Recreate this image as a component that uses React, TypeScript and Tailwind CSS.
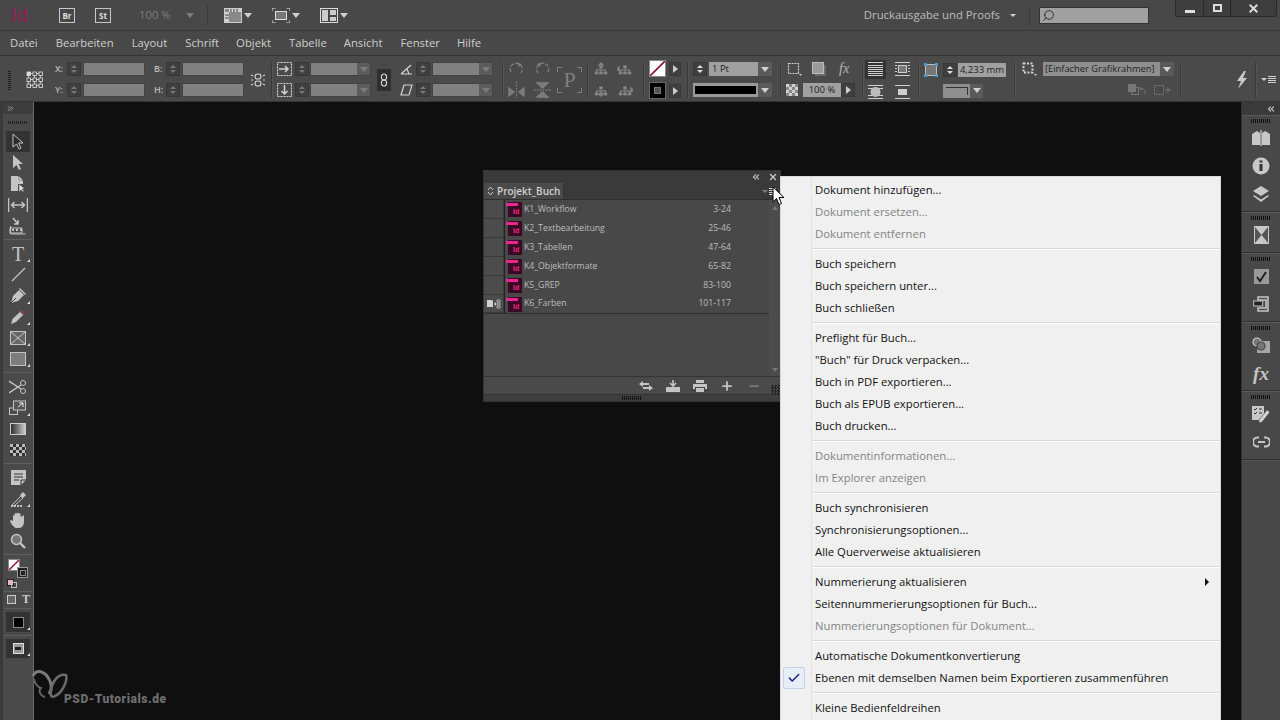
import { ChevronsLeft, X, Minus, Plus, Check, Search } from 'lucide-react';
import type { ReactNode } from 'react';

const UI = "font-['Open_Sans','Noto_Sans',sans-serif]";

// ---- small bits ----

function Ico({ w = 18, h = 18, vb, children, className = '' }: { w?: number; h?: number; vb?: string; children: ReactNode; className?: string }) {
    return (
        <svg width={w} height={h} viewBox={vb ?? `0 0 ${w} ${h}`} className={`shrink-0 ${className}`}>
            {children}
        </svg>
    );
}

function Tri({ dim, small, className = '' }: { dim?: boolean; small?: boolean; className?: string }) {
    const size = small ? 'border-x-[3px] border-t-[3px]' : 'border-x-[4px] border-t-[5px]';
    const color = dim ? 'border-t-[#7c7c7c]' : 'border-t-[#d0d0d0]';
    return <span className={`inline-block w-0 h-0 border-x-transparent shrink-0 ${size} ${color} ${className}`} />;
}

function Sep() {
    return <div className="w-[2px] h-[36px] bg-[#3a3a3a] border-r border-[#555] shrink-0" />;
}

function Spinner({ dim = true }: { dim?: boolean }) {
    const c = dim ? 'border-b-[#777]' : 'border-b-[#ddd]';
    const d = dim ? 'border-t-[#777]' : 'border-t-[#ddd]';
    return (
        <div className="w-[14px] h-[14px] bg-[#3f3f3f] border border-[#383838] flex flex-col items-center justify-center gap-[2px] shrink-0">
            <span className={`w-0 h-0 border-x-[3px] border-x-transparent border-b-[3px] ${c}`} />
            <span className={`w-0 h-0 border-x-[3px] border-x-transparent border-t-[3px] ${d}`} />
        </div>
    );
}

function Field({ w }: { w: string }) {
    return <div className={`h-[14px] bg-[#808080] border border-[#444] shrink-0 ${w}`} />;
}

function ComboField({ w }: { w: string }) {
    return (
        <div className={`h-[14px] flex bg-[#808080] border border-[#444] shrink-0 ${w}`}>
            <div className="flex-1" />
            <div className="w-[13px] bg-[#5c5c5c] flex items-center justify-center">
                <Tri dim />
            </div>
        </div>
    );
}

function ArrowBtn({ w = 'w-[12px]' }: { w?: string }) {
    return (
        <div className={`h-[14px] bg-[#3f3f3f] border border-[#383838] flex items-center justify-center shrink-0 ${w}`}>
            <span className="w-0 h-0 border-y-[4px] border-y-transparent border-l-[5px] border-l-[#ccc]" />
        </div>
    );
}

function Drop({ w = 'w-[14px]' }: { w?: string }) {
    return <div className={`h-[14px] bg-[#5a5a5a] flex items-center justify-center shrink-0 ${w}`}><Tri /></div>;
}

function Col({ top, bottom, className = '' }: { top: ReactNode; bottom: ReactNode; className?: string }) {
    return (
        <div className={`flex flex-col gap-[7px] shrink-0 ${className}`}>
            <div className="h-[14px] flex items-center">{top}</div>
            <div className="h-[14px] flex items-center">{bottom}</div>
        </div>
    );
}

function Lbl({ children }: { children: string }) {
    return <span className={`w-[12px] text-[9px] font-semibold text-[#bbb] ${UI}`}>{children}</span>;
}

// ---- control panel icons ----

const dimIcon = { stroke: '#808080', fill: 'none', strokeWidth: 1.3 };
const brightIcon = { stroke: '#d4d4d4', fill: 'none', strokeWidth: 1.2 };

function RefGrid() {
    const pts = [1, 7, 13];
    return (
        <Ico w={20} h={18}>
            <g {...brightIcon} strokeWidth={0.9}>
                <path d="M5 2.500h3M11 2.500h3M5 8.500h3M11 8.500h3M5 14.500h3M11 14.500h3M3.500 4.500v2M3.500 10.500v2M9.500 4.500v2M9.500 10.500v2M15.500 4.500v2M15.500 10.500v2" />
                {pts.map(y => pts.map(x => <rect key={`${x}-${y}`} x={x + 1} y={y} width={3.500} height={3.500} fill={x === 1 && y === 1 ? '#e0e0e0' : 'none'} />))}
            </g>
        </Ico>
    );
}

function Rotate({ flip = false }: { flip?: boolean }) {
    return (
        <Ico w={17} h={16} className={flip ? '-scale-x-100' : ''}>
            <path d="M3 11A6 6 0 1 1 13 12" {...dimIcon} strokeDasharray="4 1.500" />
            <path d="M10 2l4 1-3 3z" fill="#808080" />
        </Ico>
    );
}

function Tree({ arrow }: { arrow: 'up' | 'down' | 'left' | 'right' }) {
    const a = { up: 'M7 0l4 4H3z', down: 'M7 16l4-4H3z', left: 'M-3 8l4-4v8z', right: 'M17 8l-4-4v8z' }[arrow];
    return (
        <Ico w={16} h={16} vb="-2 0 18 16">
            <path d="M7 5v3M2 12V9h10v3M7 9v3" {...dimIcon} />
            <rect x="5" y="4" width="4" height="3" fill="#888" />
            <rect x="0" y="11" width="4" height="3" fill="#888" />
            <rect x="5" y="11" width="4" height="3" fill="#888" />
            <rect x="10" y="11" width="4" height="3" fill="#888" />
            <path d={a} fill="#808080" />
        </Ico>
    );
}

function StrokeLines({ kind }: { kind: 'fill' | 'frame' | 'dot' | 'bar' }) {
    return (
        <Ico w={15} h={14}>
            <g stroke="#cfcfcf" strokeWidth="1">
                <path d="M0 .500h15M0 13.500h15" />
                {kind === 'fill' && <path d="M0 3.500h15M0 5.500h15M0 7.500h15M0 9.500h15M0 11.500h15" />}
                {kind === 'frame' && <path d="M0 3.500h2M13 3.500h2M0 6.500h2M13 6.500h2M0 9.500h2M13 9.500h2" />}
            </g>
            {kind === 'frame' && <rect x="3.500" y="3.500" width="8" height="7" fill="#777" stroke="#cfcfcf" />}
            {kind === 'dot' && <><path d="M0 3.500h15M0 10.500h15" stroke="#cfcfcf" /><circle cx="7.500" cy="7" r="5" fill="#bdbdbd" /></>}
            {kind === 'bar' && <rect x="3" y="4" width="9" height="6" fill="#cfcfcf" />}
        </Ico>
    );
}

function ControlPanel() {
    return (
        <div className="h-[47px] bg-[#4a4a4a] border-y border-[#343434] flex items-center shrink-0 pl-[8px] pt-[2px]">
            <div className="w-[3px] h-[20px] bg-[repeating-linear-gradient(0deg,#222_0_1px,transparent_1px_2px)] shrink-0" />
            <div className="ml-[14px] shrink-0"><RefGrid /></div>
            <Col className="ml-[10px]"
                top={<><Lbl>X:</Lbl><Spinner /><Field w="w-[62px] ml-[2px]" /></>}
                bottom={<><Lbl>Y:</Lbl><Spinner /><Field w="w-[62px] ml-[2px]" /></>} />
            <Col className="ml-[9px]"
                top={<><Lbl>B:</Lbl><Spinner /><Field w="w-[62px] ml-[2px]" /></>}
                bottom={<><Lbl>H:</Lbl><Spinner /><Field w="w-[62px] ml-[2px]" /></>} />
            <div className="ml-[6px] shrink-0">
                <Ico w={16} h={16}>
                    <rect x="5" y="2" width="6" height="5" rx="2.500" {...brightIcon} />
                    <rect x="5" y="9" width="6" height="5" rx="2.500" {...brightIcon} />
                    <path d="M1 3l2 1M1 8h2M1 13l2-1M15 3l-2 1M15 8h-2M15 13l-2-1" {...brightIcon} />
                </Ico>
            </div>
            <div className="ml-[5px]"><Sep /></div>
            <Col className="ml-[4px]"
                top={<>
                    <Ico w={15} h={14}><rect x=".5" y=".5" width="14" height="13" {...brightIcon} strokeDasharray="2 1" /><path d="M2 7h9M8 4l3 3-3 3" {...brightIcon} strokeWidth={1.500} /></Ico>
                    <div className="ml-[3px]"><Spinner /></div><ComboField w="w-[61px] ml-[1px]" /></>}
                bottom={<>
                    <Ico w={15} h={14}><rect x=".5" y=".5" width="14" height="13" {...brightIcon} strokeDasharray="2 1" /><path d="M7.500 2v9M4.500 8l3 3 3-3" {...brightIcon} strokeWidth={1.500} /></Ico>
                    <div className="ml-[3px]"><Spinner /></div><ComboField w="w-[61px] ml-[1px]" /></>} />
            <div className="ml-[6px] w-[14px] h-[22px] bg-[#2f2f2f] flex items-center justify-center shrink-0">
                <Ico w={8} h={14}>
                    <rect x="1.500" y="1" width="5" height="6" rx="2.500" {...brightIcon} />
                    <rect x="1.500" y="7" width="5" height="6" rx="2.500" {...brightIcon} />
                </Ico>
            </div>
            <Col className="ml-[9px]"
                top={<>
                    <Ico w={13} h={12}><path d="M1 11L11 2M1 11h11M7 6l2 5" {...brightIcon} /></Ico>
                    <div className="ml-[3px]"><Spinner /></div><ComboField w="w-[61px] ml-[2px]" /></>}
                bottom={<>
                    <Ico w={13} h={12}><path d="M4 1h8L9 11H1z" {...brightIcon} /></Ico>
                    <div className="ml-[3px]"><Spinner /></div><ComboField w="w-[61px] ml-[2px]" /></>} />
            <div className="ml-[9px]"><Sep /></div>
            <Col className="ml-[4px]" top={<Rotate />} bottom={<Ico w={17} h={16}><path d="M8.500 0v16" {...dimIcon} strokeDasharray="1.500 1.500" /><path d="M1 14V6l5 4zM16 14V6l-5 4z" {...dimIcon} fill="#777" /></Ico>} />
            <Col className="ml-[9px]" top={<Rotate flip />} bottom={<Ico w={17} h={16}><path d="M0 8h17" {...dimIcon} strokeDasharray="1.500 1.500" /><path d="M3 1h11L8.500 6zM3 15h11L8.500 10z" {...dimIcon} fill="#777" /></Ico>} />
            <div className="ml-[6px] shrink-0 w-[25px] h-[26px] relative flex items-center justify-center">
                <span className="font-['Liberation_Serif',serif] text-[22px] leading-none text-[#808080]">P</span>
                <div className="absolute left-0 top-0 w-[5px] h-[5px] border-l border-t border-[#808080]" />
                <div className="absolute right-0 top-0 w-[5px] h-[5px] border-r border-t border-[#808080]" />
                <div className="absolute left-0 bottom-0 w-[5px] h-[5px] border-l border-b border-[#808080]" />
                <div className="absolute right-0 bottom-0 w-[5px] h-[5px] border-r border-b border-[#808080]" />
            </div>
            <div className="ml-[5px]"><Sep /></div>
            <Col className="ml-[4px]" top={<Tree arrow="up" />} bottom={<Tree arrow="down" />} />
            <Col className="ml-[8px]" top={<Tree arrow="left" />} bottom={<Tree arrow="right" />} />
            <div className="ml-[10px]"><Sep /></div>
            <div className="ml-[4px] flex flex-col gap-[5px] shrink-0">
                <div className="flex items-center gap-[3px]">
                    <div className="w-[17px] h-[17px] bg-white border border-[#888] shrink-0">
                        <Ico w={15} h={15}><path d="M0 15L15 0" stroke="#8c1230" strokeWidth="1.600" /></Ico>
                    </div>
                    <ArrowBtn />
                </div>
                <div className="flex items-center gap-[3px]">
                    <div className="w-[17px] h-[17px] bg-black border border-[#666] flex items-center justify-center shrink-0">
                        <div className="w-[7px] h-[7px] bg-[#555] border border-[#777]" />
                    </div>
                    <ArrowBtn />
                </div>
            </div>
            <div className="ml-[6px]"><Sep /></div>
            <Col className="ml-[4px]"
                top={<>
                    <Spinner dim={false} />
                    <div className={`ml-[2px] w-[49px] h-[14px] bg-[#a0a0a0] text-[9.5px] leading-[14px] pl-[3px] text-[#222] ${UI}`}>1 Pt</div>
                    <Drop /></>}
                bottom={<>
                    <div className="w-[65px] h-[14px] bg-[#999] flex items-center px-[2px]"><div className="w-full h-[8px] bg-black" /></div>
                    <Drop /></>} />
            <div className="ml-[8px]"><Sep /></div>
            <div className="ml-[4px] w-[69px] flex flex-col gap-[7px] shrink-0">
                <div className="h-[14px] flex items-center">
                    <Ico w={16} h={14}><rect x="2.500" y="1.500" width="10" height="10" {...brightIcon} strokeDasharray="2 1" /><path d="M13 12h3l-1.500 2z" fill="#ccc" /></Ico>
                    <div className="ml-[10px]">
                        <Ico w={15} h={14}><rect x="3" y="3" width="11" height="11" fill="#6a6a6a" /><rect x=".5" y=".5" width="11" height="11" fill="#999" stroke="#bbb" /></Ico>
                    </div>
                    <span className="ml-[12px] w-[16px] italic text-[14px] leading-none text-[#b8b8b8] font-['Liberation_Serif',serif]">fx</span>
                </div>
                <div className="h-[14px] flex items-center">
                    <Ico w={12} h={12}>
                        <rect width="12" height="12" fill="#888" />
                        <path d="M0 0h3v3H0zM6 0h3v3H6zM3 3h3v3H3zM9 3h3v3H9zM0 6h3v3H0zM6 6h3v3H6zM3 9h3v3H3zM9 9h3v3H9z" fill="#d0d0d0" />
                    </Ico>
                    <div className={`ml-[5px] w-[38px] h-[14px] bg-[#a0a0a0] text-[9.5px] leading-[14px] text-center text-[#222] ${UI}`}>100 %</div>
                    <ArrowBtn w="w-[14px]" />
                </div>
            </div>
            <div className="ml-[7px]"><Sep /></div>
            <div className="ml-[1px] flex flex-col gap-[5px] shrink-0">
                <div className="w-[21px] h-[19px] bg-[#333] flex items-center justify-center"><StrokeLines kind="fill" /></div>
                <div className="w-[21px] h-[16px] flex items-center justify-center"><StrokeLines kind="dot" /></div>
            </div>
            <div className="ml-[9px] flex flex-col gap-[5px] shrink-0">
                <div className="w-[15px] h-[19px] flex items-center justify-center"><StrokeLines kind="frame" /></div>
                <div className="w-[15px] h-[16px] flex items-center justify-center"><StrokeLines kind="bar" /></div>
            </div>
            <div className="ml-[8px]"><Sep /></div>
            <div className="ml-[3px] flex flex-col gap-[6px] shrink-0 items-end">
                <div className="flex items-center">
                    <Ico w={16} h={16}>
                        <rect x="2.500" y="2.500" width="11" height="11" fill="#777" stroke="#bbb" />
                        {[0, 11].map(x => [0, 11].map(y => <rect key={`${x}${y}`} x={x + 1} y={y + 1} width="3" height="3" fill="#4a9bd0" />))}
                    </Ico>
                    <div className="ml-[4px]"><Spinner dim={false} /></div>
                    <div className={`ml-[1px] w-[48px] h-[14px] bg-[#a0a0a0] text-[9.5px] leading-[14px] text-center whitespace-nowrap text-[#222] ${UI}`}>4,233 mm</div>
                </div>
                <div className="flex items-center mr-[23px]">
                    <div className="w-[27px] h-[14px] bg-[#8f8f8f] flex items-start justify-end pr-[2px] pt-[3px]"><div className="w-[22px] h-[8px] border-t border-r border-[#333]" /></div>
                    <Drop w="w-[13px]" />
                </div>
            </div>
            <div className="ml-[8px]"><Sep /></div>
            <Col className="ml-[6px]"
                top={<>
                    <Ico w={15} h={14}><rect x="1.500" y="1.500" width="9" height="9" {...brightIcon} strokeDasharray="2 1.500" strokeWidth={2} /><path d="M12 12h3l-1.500 2z" fill="#ccc" /></Ico>
                    <div className={`ml-[6px] w-[117px] h-[14px] bg-[#8f8f8f] text-[9.3px] leading-[14px] pl-[2px] text-[#222] whitespace-nowrap overflow-hidden ${UI}`}>[Einfacher Grafikrahmen]</div>
                    <Drop /></>}
                bottom={<div className="w-full flex justify-end gap-[7px] pr-[2px]">
                    <Ico w={19} h={12}><rect x=".5" y=".5" width="7" height="7" fill="#777" stroke="#777" /><rect x="3.500" y="3.500" width="7" height="7" fill="none" stroke="#777" /><path d="M13 3l-1 2 2 1M12 5c4-1 6 1 5 5" stroke="#777" fill="none" /></Ico>
                    <Ico w={18} h={12}><rect x=".5" y="1.500" width="9" height="9" fill="none" stroke="#777" strokeDasharray="2 1" /><path d="M14 3v6M11 6h6" stroke="#777" /></Ico>
                </div>} />
            <div className="ml-[6px]"><Sep /></div>
            <div className="ml-[53px] shrink-0">
                <Ico w={14} h={18}><path d="M9 0L2 10h4L3 18l9-11H8l3-7z" fill="#c8c8c8" /></Ico>
            </div>
            <div className="ml-[6px]"><Sep /></div>
            <div className="ml-[4px] flex items-center gap-[1px] shrink-0">
                <Tri small />
                <div className="w-[8px] h-[7px] bg-[repeating-linear-gradient(180deg,#d0d0d0_0_1px,transparent_1px_2px)]" />
            </div>
        </div>
    );
}

function TitleBar() {
    return (
        <div className="h-[31px] bg-[#484848] border-b border-[#383838] flex items-center shrink-0 relative">
            <span className="ml-[11px] w-[21px] font-['Liberation_Sans',sans-serif] font-bold text-[20px] text-[#7d2c52] leading-none">Id</span>
            <div className={`ml-[27px] w-[16px] h-[15px] border border-[#c8c8c8] text-[8px] leading-[13px] text-center font-bold text-[#ddd] ${UI}`}>Br</div>
            <div className={`ml-[20px] w-[16px] h-[15px] border border-[#c8c8c8] text-[8px] leading-[13px] text-center font-bold text-[#ddd] ${UI}`}>St</div>
            <span className={`ml-[28px] w-[45px] text-[11.3px] text-[#7c7c7c] ${UI}`}>100 %</span>
            <Tri dim className="ml-[2px]" />
            <div className="ml-[13px] w-px h-[20px] bg-[#3a3a3a]" />
            <div className="ml-[16px] flex items-center gap-[2px]">
                <Ico w={18} h={15}><rect x=".5" y=".5" width="17" height="14" fill="#888" stroke="#ccc" /><path d="M1 1h16v3H1z M1 1v13h4V1z" fill="#d0d0d0" /><path d="M7 1v3M10 1v3M13 1v3M1 7h4M1 10h4" stroke="#444" /></Ico>
                <Tri />
            </div>
            <div className="ml-[20px] flex items-center gap-[2px]">
                <Ico w={18} h={15}><rect x="3.500" y="3.500" width="11" height="8" fill="#777" stroke="#ddd" /><path d="M0 3V0h4M14 0h4v3M0 12v3h4M14 15h4v-3" fill="none" stroke="#ddd" /></Ico>
                <Tri />
            </div>
            <div className="ml-[20px] flex items-center gap-[2px]">
                <Ico w={18} h={15}><rect x=".5" y=".5" width="17" height="14" fill="none" stroke="#ddd" /><path d="M2 2h6v11H2zM10 2h6v5h-6zM10 9h6v4h-6z" fill="#ccc" /></Ico>
                <Tri />
            </div>
            <div className="flex-1" />
            <span className={`text-[11.3px] text-[#bdbdbd] whitespace-nowrap ${UI}`}>Druckausgabe und Proofs</span>
            <Tri small className="ml-[10px]" />
            <div className="ml-[13px] w-px h-[20px] bg-[#3a3a3a]" />
            <div className="ml-[9px] mr-[131px] w-[110px] h-[17px] bg-[#a0a0a0] border border-[#333] flex items-center pl-[2px]">
                <Search size={13} strokeWidth={1.600} color="#222" className="-scale-x-100" />
            </div>
            {/* window buttons */}
            <div className="absolute right-[3px] top-0 w-[102px] h-[17px] bg-[#3e3e3e] border-x border-b border-[#2a2a2a] rounded-b-[3px] flex">
                <div className="w-[28px] flex items-end justify-center pb-[3px] border-r border-[#2a2a2a]"><div className="w-[10px] h-[3px] bg-[#ddd]" /></div>
                <div className="w-[27px] flex items-center justify-center border-r border-[#2a2a2a]"><div className="w-[9px] h-[8px] border-2 border-[#ddd]" /></div>
                <div className="flex-1 flex items-center justify-center"><X size={13} strokeWidth={3.500} color="#ddd" /></div>
            </div>
        </div>
    );
}

function MenuBar() {
    const items = [['Datei', 'ml-[10px]'], ['Bearbeiten', 'ml-[18px]'], ['Layout', 'ml-[18px]'], ['Schrift', 'ml-[18px]'], ['Objekt', 'ml-[17px]'], ['Tabelle', 'ml-[18px]'], ['Ansicht', 'ml-[17px]'], ['Fenster', 'ml-[18px]'], ['Hilfe', 'ml-[17px]']];
    return (
        <div className={`h-[24px] bg-[#484848] flex items-center shrink-0 text-[11.3px] text-[#cfcfcf] ${UI}`}>
            {items.map(([t, m]) => <span key={t} className={m}>{t}</span>)}
        </div>
    );
}

// ---- left tools ----

const g = '#c4c4c4';

function Tool({ h = 'h-[21px]', active, more, children }: { h?: string; active?: boolean; more?: boolean; children: ReactNode }) {
    return (
        <div className={`${h} w-[24px] mx-auto flex items-center justify-center relative shrink-0 ${active ? 'bg-[#333]' : ''}`}>
            {children}
            {more && <span className="absolute right-0 bottom-[2px] w-0 h-0 border-l-[3px] border-l-transparent border-b-[3px] border-b-[#ddd]" />}
        </div>
    );
}

function Rule() {
    return <div className="w-[28px] h-px bg-[#5e5e5e] my-[3px] shrink-0 mx-auto" />;
}

function LeftTools() {
    return (
        <div className="w-[34px] bg-[#4a4a4a] border-l-[3px] border-l-[#3a3a3a] border-r border-r-[#6a6a6a] flex flex-col shrink-0">
            <div className="h-[12px] bg-[#3d3d3d] shrink-0 flex items-center pl-[3px] text-[#bbb]"><ChevronsLeft size={9} className="rotate-180" /></div>
            <div className="h-[17px] shrink-0 flex items-center justify-center"><div className="w-[20px] h-[3px] bg-[repeating-linear-gradient(90deg,#222_0_1px,transparent_1px_2px)]" /></div>
            <Tool active><Ico w={14} h={17}><path d="M2 1v13l3.500-3 2.500 5 2-1-2.500-5H12z" fill="#2a2a2a" stroke={g} /></Ico></Tool>
            <Tool><Ico w={14} h={17}><path d="M2 1v13l3.500-3 2.500 5 2-1-2.500-5H12z" fill={g} /></Ico></Tool>
            <Tool><Ico w={16} h={18}><path d="M1 1h7l5 5v3H8v7H1z" fill={g} /><path d="M9 1l4 4H9zM9 9v8l2-2 2 2 1-1-2-2h3z" fill="#e0e0e0" stroke="#444" strokeWidth=".5" /></Ico></Tool>
            <Tool><Ico w={20} h={16}><path d="M.500 1v14M19.500 1v14" stroke={g} strokeWidth="1.500" /><path d="M4 8h12M6.500 5L3.500 8l3 3M13.500 5l3 3-3 3" fill="none" stroke={g} strokeWidth="1.500" /></Ico></Tool>
            <Tool><Ico w={18} h={18}><path d="M1.500 9v8h15M1 11h12v5H1z" fill="none" stroke={g} /><path d="M3 12h2v2H3zM7 12h2v2H7zM11 12h2v2h-2z" fill={g} /><path d="M4 1l5 6M9 3v4H5" fill="none" stroke={g} strokeWidth="1.500" /></Ico></Tool>
            <Rule />
            <Tool more><span className="font-['Liberation_Serif',serif] text-[20px] leading-none text-[#c4c4c4]">T</span></Tool>
            <Tool><Ico w={15} h={15}><path d="M1 14L14 1" stroke={g} strokeWidth="1.200" /></Ico></Tool>
            <Tool more><Ico w={17} h={17}><path d="M1 16l2-7 6-6 5 5-6 6z" fill={g} /><path d="M10 1l6 6-1 1-6-6z" fill={g} /><path d="M1 16l5-5" stroke="#444" /></Ico></Tool>
            <Tool more><Ico w={16} h={16}><path d="M1 15l1.500-5L11 2l3 3-8 8z" fill={g} /><path d="M10 3l3 3 2-2-3-3z" fill="#8a3a4a" /></Ico></Tool>
            <Tool more><Ico w={16} h={14}><rect x=".5" y=".5" width="15" height="13" fill="#666" stroke={g} /><path d="M1 1l14 12M15 1L1 13" stroke={g} /></Ico></Tool>
            <Tool more><Ico w={16} h={14}><rect x=".5" y=".5" width="15" height="13" fill="#7d7d7d" stroke={g} /></Ico></Tool>
            <Rule />
            <Tool><Ico w={18} h={14}><circle cx="14" cy="3" r="2.500" fill="none" stroke={g} /><circle cx="14" cy="11" r="2.500" fill="none" stroke={g} /><path d="M0 1l12 8M0 13l12-8" stroke={g} strokeWidth="1.500" /></Ico></Tool>
            <Tool more><Ico w={18} h={15}><rect x=".5" y="8" width="8" height="6.500" fill="none" stroke={g} /><rect x="4.500" y="1" width="12" height="9" fill="#555" stroke={g} /><path d="M9 7l5-4M10 3h4v4" fill="none" stroke="#eee" /></Ico></Tool>
            <Tool><div className="w-[16px] h-[12px] border border-[#ccc] bg-gradient-to-r from-[#333] to-[#ccc]" /></Tool>
            <Tool><div className="w-[16px] h-[12px] bg-[repeating-conic-gradient(#333_0_25%,#bbb_0_50%)] bg-[length:6px_6px]" /></Tool>
            <Rule />
            <Tool><Ico w={15} h={15}><path d="M0 0h15v10l-5 5H0z" fill={g} /><path d="M3 4h9M3 7h9M3 10h5" stroke="#333" /><path d="M10 15v-5h5" fill="none" stroke="#333" /></Ico></Tool>
            <Tool more><Ico w={17} h={16}><path d="M2 14L11 5l2 2-9 8z" fill="none" stroke={g} /><path d="M10 4l3-3 3 3-3 3z" fill={g} /><path d="M1 15h12" stroke={g} strokeWidth="2" strokeDasharray="2 1" /></Ico></Tool>
            <Tool><Ico w={16} h={16}><path d="M3 9V4c0-1 1.500-1 1.500 0V2c0-1 2-1 2 0v-.5c0-1 2-1 2 0V2c0-1 2-1 2 0v3c0-1 2-1 2 0v-1c0-1 1.500-1 1.500 0v6c0 3-2 6-5 6H6C4 16 0 10 0 9c0-1 2-1 3 0z" fill={g} /></Ico></Tool>
            <Tool><Ico w={16} h={16}><circle cx="6.500" cy="6.500" r="5" fill="#777" stroke={g} strokeWidth="1.500" /><path d="M10 10l5 5" stroke={g} strokeWidth="2.400" /></Ico></Tool>
            <Rule />
            <div className="h-[30px] w-[24px] mx-auto relative shrink-0">
                <div className="absolute left-[2px] top-[1px] w-[12px] h-[12px] bg-white border border-[#888] overflow-hidden"><Ico w={10} h={10}><path d="M0 10L10 0" stroke="#8c1230" strokeWidth="1.400" /></Ico></div>
                <div className="absolute left-[11px] top-[9px] w-[11px] h-[11px] bg-[#222] border border-[#999] flex items-center justify-center"><div className="w-[6px] h-[6px] border border-[#888]" /></div>
                <div className="absolute left-[1px] top-[21px] w-[7px] h-[7px] bg-[#e8b8c8] border border-[#222]" />
                <div className="absolute left-[5px] top-[24px] w-[6px] h-[6px] border border-[#bbb]" />
            </div>
            <Rule />
            <div className="h-[12px] w-[24px] mx-auto flex items-center justify-between shrink-0 -mt-[2px]">
                <div className="w-[9px] h-[9px] border border-[#ccc] bg-[#666] ml-[1px]" />
                <span className="font-['Liberation_Serif',serif] font-bold text-[12px] leading-none text-[#ccc]">T</span>
            </div>
            <Rule />
            <Tool h="h-[20px]" active more><div className="w-[11px] h-[11px] bg-black border border-[#888]" /></Tool>
            <Rule />
            <Tool h="h-[19px]" active more><div className="w-[11px] h-[11px] bg-[#999] border border-[#ddd] flex items-center justify-center"><div className="w-[6px] h-[3px] bg-[#222]" /></div></Tool>
        </div>
    );
}

// ---- book panel ----

const docs = [
    ['K1_Workflow', '3-24'],
    ['K2_Textbearbeitung', '25-46'],
    ['K3_Tabellen', '47-64'],
    ['K4_Objektformate', '65-82'],
    ['K5_GREP', '83-100'],
    ['K6_Farben', '101-117'],
];

function DocIcon() {
    return (
        <div className="w-[16px] h-[15px] relative shrink-0">
            <div className="absolute left-[2px] top-0 w-[14px] h-[15px] bg-[#3a0a24]" />
            <div className="absolute left-0 top-[1px] w-[12px] h-[3px] bg-[#e8288c]" />
            <span className="absolute left-[7px] top-[5px] text-[7px] leading-[9px] font-bold text-[#f0287f] font-['Liberation_Sans',sans-serif]">Id</span>
        </div>
    );
}

function BookPanel() {
    return (
        <div className={`absolute left-[483px] top-[170px] w-[298px] h-[232px] bg-[#484848] border border-[#333] flex flex-col ${UI}`}>
            <div className="h-[12px] bg-[#3a3a3a] flex items-center justify-end gap-[7px] pr-[2px] shrink-0">
                <ChevronsLeft size={10} strokeWidth={3} color="#bbb" />
                <X size={10} strokeWidth={3} color="#ccc" />
            </div>
            <div className="h-[17px] bg-[#3a3a3a] flex shrink-0 border-b border-[#2f2f2f]">
                <div className="w-[80px] bg-[#4a4a4a] flex items-center pl-[3px] border-r border-[#333]">
                    <Ico w={7} h={10}><path d="M1 4l2.500-3L6 4M1 6l2.500 3L6 6" fill="none" stroke="#ccc" /></Ico>
                    <span className="text-[10px] font-semibold text-[#d0d0d0] ml-[3px] whitespace-nowrap">Projekt_Buch</span>
                </div>
                <div className="flex-1" />
                <div className="mr-[2px] w-[16px] flex items-center gap-[1px]">
                    <Tri small dim />
                    <div className="w-[7px] h-[7px] bg-[repeating-linear-gradient(180deg,#d0d0d0_0_1px,transparent_1px_2px)]" />
                </div>
            </div>
            <div className="flex-1 flex min-h-0">
                <div className="flex-1">
                    {docs.map(([name, pages], i) => (
                        <div key={name} className={`h-[19px] flex items-center ${i === 5 ? 'border-b border-[#2f2f2f]' : ''}`}>
                            <div className="w-[20px] h-full bg-[#4c4c4c] border-r border-b border-[#3a3a3a] flex items-center justify-center shrink-0">
                                {i === 5 && <Ico w={14} h={10}><path d="M0 1h5l1 1v6H0z" fill="#d0d0d0" /><path d="M7 5l2-2v4z" fill="#d0d0d0" /><path d="M10 1h3v2h-3zM10 4h3v2h-3zM10 7h3v2h-3z" fill="none" stroke="#d0d0d0" strokeWidth=".7" /></Ico>}
                            </div>
                            <div className="w-px h-full bg-[#222] shrink-0" />
                            <div className="ml-[1px]"><DocIcon /></div>
                            <span className="ml-[2px] text-[8.7px] text-[#bdbdbd] whitespace-nowrap">{name}</span>
                            <span className="ml-auto mr-[38px] text-[8.7px] text-[#bdbdbd]">{pages}</span>
                        </div>
                    ))}
                </div>
                <div className="w-[11px] bg-[#4c4c4c] flex flex-col items-center justify-between pt-[6px] pb-[4px] shrink-0">
                    <span className="w-0 h-0 border-x-[3px] border-x-transparent border-b-[4px] border-b-[#777]" />
                    <span className="w-0 h-0 border-x-[3px] border-x-transparent border-t-[4px] border-t-[#777]" />
                </div>
            </div>
            <div className="h-[18px] bg-[#4a4a4a] border-t border-[#333] flex items-center justify-end gap-[13px] pr-[19px] shrink-0 relative">
                <Ico w={14} h={12}><path d="M0 4l4-3v2h6v2H4v2zM14 8l-4-3v2H4v2h6v2z" fill="#c4c4c4" /></Ico>
                <Ico w={14} h={12}><path d="M0 7h14v5H0z" fill="#c4c4c4" /><path d="M7 0v6M4 3l3 3 3-3" stroke="#c4c4c4" strokeWidth="1.600" fill="none" /></Ico>
                <Ico w={14} h={12}><path d="M3 0h8v3H3zM0 4h14v5h-2V7H2v2H0zM3 8h8v4H3z" fill="#c4c4c4" /></Ico>
                <Plus size={14} strokeWidth={3} color="#c4c4c4" />
                <Minus size={14} strokeWidth={3} color="#777" />
                <div className="absolute right-0 bottom-0 w-[9px] h-[9px] bg-[repeating-conic-gradient(#222_0_25%,transparent_0_50%)] bg-[length:3px_3px]" />
            </div>
            <div className="h-[7px] bg-[#3e3e3e] border-t border-[#333] flex items-center justify-center shrink-0">
                <div className="w-[20px] h-[4px] bg-[repeating-linear-gradient(90deg,#111_0_1px,transparent_1px_2px)]" />
            </div>
        </div>
    );
}

// ---- context menu ----

type Item = { t: string; off?: boolean; sub?: boolean; check?: boolean };
const groups: Item[][] = [
    [{ t: 'Dokument hinzufügen...' }, { t: 'Dokument ersetzen...', off: true }, { t: 'Dokument entfernen', off: true }],
    [{ t: 'Buch speichern' }, { t: 'Buch speichern unter...' }, { t: 'Buch schließen' }],
    [{ t: 'Preflight für Buch...' }, { t: '"Buch" für Druck verpacken...' }, { t: 'Buch in PDF exportieren...' }, { t: 'Buch als EPUB exportieren...' }, { t: 'Buch drucken...' }],
    [{ t: 'Dokumentinformationen...', off: true }, { t: 'Im Explorer anzeigen', off: true }],
    [{ t: 'Buch synchronisieren' }, { t: 'Synchronisierungsoptionen...' }, { t: 'Alle Querverweise aktualisieren' }],
    [{ t: 'Nummerierung aktualisieren', sub: true }, { t: 'Seitennummerierungsoptionen für Buch...' }, { t: 'Nummerierungsoptionen für Dokument...', off: true }],
    [{ t: 'Automatische Dokumentkonvertierung' }, { t: 'Ebenen mit demselben Namen beim Exportieren zusammenführen', check: true }],
    [{ t: 'Kleine Bedienfeldreihen' }],
];

function BookMenu() {
    return (
        <div className={`absolute left-[780px] top-[176px] bottom-0 w-[441px] bg-[#f0f0f0] border-l border-t border-r border-[#d8d8d8] overflow-hidden pt-[2px] ${UI}`}>
            <div className="absolute left-[30px] top-0 bottom-0 w-px bg-[#e3e3e3]" />
            {groups.map((grp, i) => (
                <div key={i}>
                    {i > 0 && <div className="h-[8px] flex items-center pl-[30px]"><div className="w-full h-px bg-[#d9d9d9] border-b border-white box-content" /></div>}
                    {grp.map(it => (
                        <div key={it.t} className={`h-[22px] flex items-center pl-[34px] pr-[11px] relative text-[11.3px] whitespace-nowrap ${it.off ? 'text-[#848484]' : 'text-[#111]'}`}>
                            {it.check && (
                                <div className="absolute left-[2px] top-0 w-[22px] h-[22px] bg-[#e8eef8] border border-[#c5d2e8] rounded-[2px] flex items-center justify-center">
                                    <Check size={14} strokeWidth={2.600} color="#1a237e" />
                                </div>
                            )}
                            {it.t}
                            {it.sub && <span className="ml-auto w-0 h-0 border-y-[4px] border-y-transparent border-l-[4px] border-l-[#111]" />}
                        </div>
                    ))}
                </div>
            ))}
        </div>
    );
}

function Cursor() {
    return (
        <svg width="14" height="20" viewBox="0 0 14 20" className="absolute left-[772px] top-[186px]">
            <path d="M1 1v15l3.500-3.500 2.500 6 2.500-1-2.500-6H12z" fill="#fff" stroke="#000" />
        </svg>
    );
}

// ---- right dock ----

function DockGroup({ h, children }: { h: string; children: ReactNode }) {
    return (
        <div className={`${h} border-b border-[#2f2f2f] border-t-[1px] border-t-[#5a5a5a] flex flex-col items-center pt-[3px] shrink-0`}>
            <div className="w-[20px] h-[4px] bg-[repeating-linear-gradient(90deg,#111_0_1px,transparent_1px_2px)] mb-[1px] shrink-0" />
            {children}
        </div>
    );
}

function DockIcon({ children }: { children: ReactNode }) {
    return <div className="h-[28px] flex items-center justify-center shrink-0">{children}</div>;
}

function RightDock() {
    const c = '#c8c8c8';
    return (
        <div className="w-[39px] bg-[#484848] border-l border-[#333] flex flex-col shrink-0">
            <div className="h-[13px] bg-[#3a3a3a] flex items-center justify-end pr-[4px] shrink-0">
                <ChevronsLeft size={10} strokeWidth={3} color="#bbb" />
            </div>
            <DockGroup h="h-[97px]">
                <DockIcon><Ico w={18} h={16}><path d="M0 4l5-3 3 2v12H0zM18 4l-5-3-3 2v12h8z" fill={c} /><path d="M9 0v16" stroke="#eee" /></Ico></DockIcon>
                <DockIcon><Ico w={18} h={18}><circle cx="9" cy="9" r="8.500" fill={c} /><path d="M7.500 7h3v7h-3zM7.500 3.500h3v2h-3z" fill="#333" /></Ico></DockIcon>
                <DockIcon><Ico w={18} h={18}><path d="M9 1l8 5-8 5-8-5z" fill={c} /><path d="M2 10l7 4.500L16 10l1 1-8 6-8-6z" fill={c} /></Ico></DockIcon>
            </DockGroup>
            <DockGroup h="h-[41px]">
                <DockIcon><Ico w={15} h={18}><rect x=".5" y=".5" width="14" height="17" fill="#555" stroke={c} /><path d="M1 1h13L7.500 9zM1 17h13L7.500 9z" fill={c} /></Ico></DockIcon>
            </DockGroup>
            <DockGroup h="h-[69px]">
                <DockIcon><Ico w={15} h={15}><rect width="15" height="15" fill="#999" /><path d="M3 8l3 4 6-9" stroke="#222" strokeWidth="2" fill="none" /></Ico></DockIcon>
                <DockIcon><Ico w={16} h={16}><path d="M5 1h10v14H5v-3h8V4H5z" fill="none" stroke={c} strokeWidth="1.500" /><rect x="0.700" y="5" width="9" height="5" fill="#222" stroke={c} /></Ico></DockIcon>
            </DockGroup>
            <DockGroup h="h-[69px]">
                <DockIcon><Ico w={18} h={16}><rect x="5" y="4" width="13" height="12" fill="#a5a5a5" /><circle cx="5" cy="5" r="4" fill="#777" stroke={c} strokeWidth="1.200" /><circle cx="9" cy="9" r="4" fill="#777" stroke="#444" strokeWidth="1.200" /></Ico></DockIcon>
                <DockIcon><span className="font-['Liberation_Serif',serif] italic font-bold text-[19px] leading-none text-[#c4c4c4]">fx</span></DockIcon>
            </DockGroup>
            <DockGroup h="h-[69px]">
                <DockIcon><Ico w={18} h={18}><path d="M0 1h12v14H0z" fill={c} /><path d="M2 4l1 1 2-2M2 8l1 1 2-2M7 4h3M7 8h3" stroke="#333" fill="none" /><path d="M7 15l8-10 3 2-8 10-3 1z" fill="#d4d4d4" stroke="#444" strokeWidth=".6" /></Ico></DockIcon>
                <DockIcon><Ico w={17} h={12}><path d="M6 1.500H4.500a4.500 4.500 0 0 0 0 9H6M11 1.500h1.500a4.500 4.500 0 0 1 0 9H11M5 6h7" stroke={c} strokeWidth="2" fill="none" /></Ico></DockIcon>
            </DockGroup>
            <div className="flex-1 bg-[#484848] border-t border-[#555]" />
        </div>
    );
}

function Watermark() {
    return (
        <div className="absolute left-[31px] top-[667px] flex items-end pointer-events-none">
            <svg width="37" height="36" viewBox="0 0 37 36" className="shrink-0">
                <path d="M2 9C5 2 14 3 19 14c2 5 1 10-1 13" fill="none" stroke="#7a7a7a" strokeWidth="3" />
                <path d="M20 24c1-9 7-18 15-16 2 6-4 18-11 21-3 2-5 0-4-5z" fill="none" stroke="#6c6c6c" strokeWidth="2.500" />
                <path d="M3 12c1 5 4 8 7 9-3 2-1 8 4 9" fill="none" stroke="#666" strokeWidth="1.800" />
            </svg>
            <span className="ml-[-4px] mb-[-5px] font-['Roboto',sans-serif] font-black text-[12px] tracking-[0.55px] text-[#6e6e6e] whitespace-nowrap">PSD-Tutorials.de</span>
        </div>
    );
}

export default function App() {
    return (
        <div className="w-[1280px] h-[720px] overflow-hidden bg-[#0f0f0f] flex flex-col relative">
            <TitleBar />
            <MenuBar />
            <ControlPanel />
            <div className="flex-1 flex min-h-0">
                <LeftTools />
                <div className="flex-1" />
                <RightDock />
            </div>
            <BookPanel />
            <BookMenu />
            <Cursor />
            <Watermark />
        </div>
    );
}
